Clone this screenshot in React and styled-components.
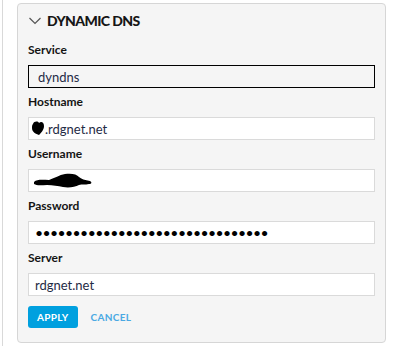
import React from 'react';
import styled, { createGlobalStyle } from 'styled-components';

const Global = createGlobalStyle`
  html, body {
    margin: 0;
    padding: 0;
    background: #ffffff;
    font-family: Lato, "Open Sans", sans-serif;
  }
`

const Page = styled.div`
  width: 393px;
  height: 346px;
  box-sizing: border-box;
  padding: 3px 0 0 17px;
  position: relative;
  &::before {
    content: "";
    position: absolute;
    left: 2px;
    top: 0;
    bottom: 0;
    border-left: 1px solid #d9d9d9;
  }
`

const Panel = styled.section`
  width: 369px;
  height: 340px;
  box-sizing: border-box;
  background: #f5f5f5;
  border: 1px solid #d6d6d6;
  border-radius: 4px;
  padding: 0 10px;
`

const Header = styled.div`
  display: flex;
  align-items: center;
  gap: 6px;
  height: 38px;
  padding-bottom: 5px;
  padding-left: 1px;
  box-sizing: border-box;
`

const Title = styled.h2`
  margin: 0;
  font-size: 14px;
  font-weight: 900;
  color: #161616;
  letter-spacing: -0.6px;
`

const Field = styled.div`
  display: flex;
  flex-direction: column;
  margin-bottom: 6px;
`

const Label = styled.label`
  font-size: 12px;
  line-height: 16px;
  font-weight: 700;
  color: #141414;
  margin-bottom: 7px;
`

const InputBox = styled.div`
  position: relative;
  width: 347px;
  height: 23px;
`

const Input = styled.input`
  width: 100%;
  height: 100%;
  box-sizing: border-box;
  margin: 0;
  border: 1px solid ${p => (p.$focus ? '#000' : '#dadada')};
  background: ${p => (p.$focus ? '#f5f5f5' : '#fff')};
  padding: 0 0 0 ${p => p.$pad || 6}px;
  font-family: Lato, "Open Sans", sans-serif;
  font-size: 13px;
  color: #1f2b45;
  outline: none;
  &[type="password"] {
    font-size: 14px;
    letter-spacing: -0.6px;
    color: #000;
  }
`

const Blot = styled.svg`
  position: absolute;
  left: ${p => p.$left}px;
  top: ${p => p.$top}px;
`

const Actions = styled.div`
  display: flex;
  align-items: center;
  gap: 9px;
  margin-top: 10px;
`

const Button = styled.button`
  height: 22px;
  box-sizing: border-box;
  border: none;
  border-radius: 3px;
  padding: 0 ${p => (p.$primary ? '9px' : '4px')};
  background: ${p => (p.$primary ? '#00a0df' : 'transparent')};
  color: ${p => (p.$primary ? '#ffffff' : '#4aa9e3')};
  font-family: Lato, "Open Sans", sans-serif;
  font-size: 10px;
  font-weight: 700;
  letter-spacing: 0.3px;
  cursor: pointer;
`

const Chevron = () => (
  <svg width="12" height="8" viewBox="0 0 12 8">
    <path d="M0.5 1 L6 6.5 L11.5 1" fill="none" stroke="#555" strokeWidth="1.2" />
  </svg>
)

const App = () => {
  return (
    <Page>
      <Global />
      <Panel>
        <Header>
          <Chevron />
          <Title>DYNAMIC DNS</Title>
        </Header>
        <Field>
          <Label>Service</Label>
          <InputBox>
            <Input $focus $pad={9} readOnly value="dyndns" />
          </InputBox>
        </Field>
        <Field>
          <Label>Hostname</Label>
          <InputBox>
            <Input $pad={16} readOnly value=".rdgnet.net" />
            <Blot $left={3} $top={3} width="14" height="16" viewBox="0 0 14 16">
              <path d="M2 4 C3 1 7 1 8 3 C10 1 13 2 13 6 C13 10 10 13 8 15 C5 14 1 12 1 8 C1 6 1 5 2 4 Z" fill="#000" />
            </Blot>
          </InputBox>
        </Field>
        <Field>
          <Label>Username</Label>
          <InputBox>
            <Input $pad={6} readOnly value="" />
            <Blot $left={5} $top={3} width="60" height="17" viewBox="0 0 60 17">
              <path d="M1 10 C4 7 10 8 16 8 C22 6 26 3 32 2 C38 1 44 2 46 5 C48 7 52 8 57 9 C59 10 59 12 56 12 C52 13 49 12 46 13 C42 15 36 16 30 15 C25 14 20 13 14 13 C9 13 4 14 1 12 Z" fill="#000" />
            </Blot>
          </InputBox>
        </Field>
        <Field>
          <Label>Password</Label>
          <InputBox>
            <Input type="password" $pad={6} readOnly value="xxxxxxxxxxxxxxxxxxxxxxxxxxxxxxx" />
          </InputBox>
        </Field>
        <Field>
          <Label>Server</Label>
          <InputBox>
            <Input $pad={6} readOnly value="rdgnet.net" />
          </InputBox>
        </Field>
        <Actions>
          <Button $primary>APPLY</Button>
          <Button>CANCEL</Button>
        </Actions>
      </Panel>
    </Page>
  );
};

export default App;
